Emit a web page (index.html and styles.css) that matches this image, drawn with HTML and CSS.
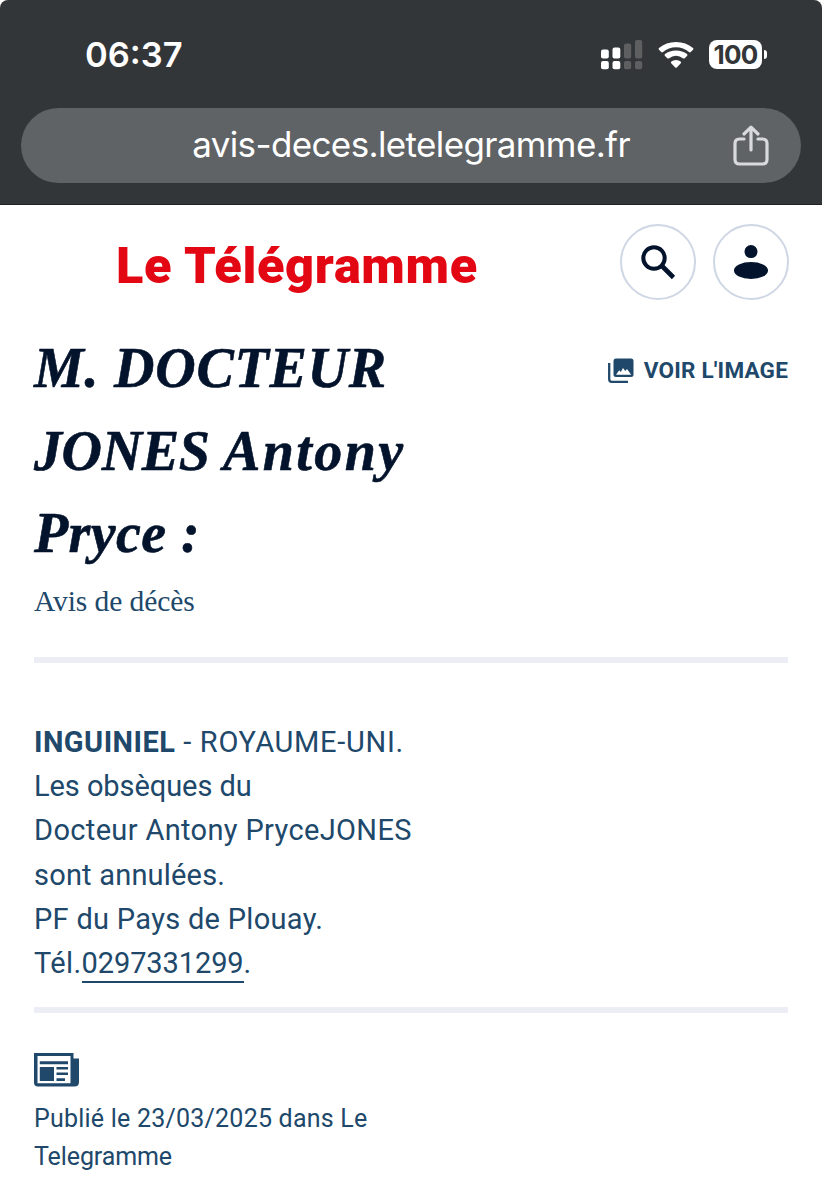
FILE: index.html
```html
<!DOCTYPE html>
<html lang="fr">
<head>
<meta charset="utf-8">
<title>Avis de décès - Le Télégramme</title>
<link rel="stylesheet" href="styles.css">
</head>
<body>
<div class="chrome">
  <div class="status">
    <span class="time">06:37</span>
    <div class="indicators">
      <svg class="signal" width="42" height="30" viewBox="0 0 42 30">
        <g fill="#fff"><rect x="0" y="9.500" width="7.800" height="9" rx="2"/><rect x="0" y="21" width="7.800" height="8.300" rx="2"/><rect x="11.500" y="7.500" width="7.800" height="11" rx="2"/><rect x="11.500" y="21" width="7.800" height="8.300" rx="2"/></g>
        <g fill="#5d5f61"><rect x="23" y="3.500" width="7.200" height="15" rx="2"/><rect x="23" y="21" width="7.200" height="8.300" rx="2"/><rect x="34" y="0" width="7.200" height="18.500" rx="2"/><rect x="34" y="21" width="7.200" height="8.300" rx="2"/></g>
      </svg>
      <svg class="wifi" width="36" height="28" viewBox="0 0 36 28" fill="#fff">
        <path d="M1 8.800Q0 7.900 1 7Q8 1 18 1T35 7Q36 7.900 35 8.800L32.800 11Q32 11.800 31 11Q25.500 6.200 18 6.200T5 11Q4 11.800 3.200 11Z"/>
        <path d="M7 14.900Q6 14 7 13.100Q11.500 9.500 18 9.500T29 13.100Q30 14 29 14.900L26.700 17.200Q25.800 18 24.800 17.200Q22 14.700 18 14.700T11.200 17.200Q10.200 18 9.300 17.200Z"/>
        <path d="M13.200 22.200Q12.500 21.300 13.400 20.600Q15 19 18 19T22.600 20.600Q23.500 21.300 22.800 22.200L18.800 26.400Q18 27.200 17.200 26.400Z"/>
      </svg>
      <div class="battery"><span class="level">100</span><span class="tip"></span></div>
    </div>
  </div>
  <div class="address">
    <span class="url">avis-deces.letelegramme.fr</span>
    <svg class="share" width="36" height="42" viewBox="0 0 36 42" fill="none" stroke="#d8dade" stroke-width="3.200" stroke-linecap="round" stroke-linejoin="round">
      <path d="M11 14H6.500Q2 14 2 18.500V34.500Q2 39 6.500 39H29.500Q34 39 34 34.500V18.500Q34 14 29.500 14H25"/>
      <path d="M18 25V2.500M11 9L18 2.200L25 9"/>
    </svg>
  </div>
</div>
<header class="masthead">
  <div class="logo">Le Télégramme</div>
  <div class="actions">
    <div class="round"><svg width="36" height="36" viewBox="0 0 36 36" fill="none" stroke="#03132b"><circle cx="14" cy="14" r="10.700" stroke-width="4"/><path d="M21.500 21.500L33.500 33.500" stroke-width="4.600"/></svg></div>
    <div class="round"><svg width="36" height="36" viewBox="0 0 36 36" fill="#03132b"><circle cx="18" cy="7.600" r="6.500"/><ellipse cx="18" cy="26.500" rx="17" ry="8.500"/></svg></div>
  </div>
</header>
<main class="notice">
  <div class="heading">
    <h1 class="title"><span class="line t1">M. DOCTEUR</span><span class="line t2">JONES <span class="first-name">Antony</span></span><span class="line t3">Pryce :</span></h1>
    <div class="view">
      <svg width="26" height="25" viewBox="0 0 26 25"><path d="M1.200 5V21.300Q1.200 23.800 3.700 23.800H20" fill="none" stroke="#20486a" stroke-width="2.300"/><path fill="#20486a" fill-rule="evenodd" d="M8 .5H23Q25.500 .5 25.500 3V16.500Q25.500 19 23 19H8Q5.500 19 5.500 16.500V3Q5.500 .5 8 .5ZM8 16.700H23.200L19 11L17.300 13L15 10L12.800 14L11.200 12.300Z"/></svg>
      <span class="view-label">VOIR L'IMAGE</span>
    </div>
  </div>
  <p class="kind">Avis de décès</p>
  <div class="rule"></div>
  <div class="text">
    <p class="b1"><strong>INGUINIEL</strong> - ROYAUME-UNI.</p>
    <p class="b2">Les obsèques du</p>
    <p class="b3">Docteur Antony PryceJONES</p>
    <p class="b4">sont annulées.</p>
    <p class="b5">PF du Pays de Plouay.</p>
    <p class="b6">Tél.<a class="phone">0297331299</a>.</p>
  </div>
  <div class="rule"></div>
  <div class="published">
    <svg class="paper" width="46" height="34" viewBox="0 0 46 34"><path fill="#20486a" fill-rule="evenodd" d="M0 0H39.500V5.500H45V29Q45 33.500 40.500 33.500H4Q0 33.500 0 29.500ZM3.500 3V30.300H36.500V3Z"/><path fill="#20486a" d="M5.800 8.300H34V11.200H5.800ZM5.800 14H20V28H5.800ZM22.500 14H34V16.600H22.500ZM22.500 19.500H34V22.100H22.500ZM22.500 25.300H31V27.900H22.500Z"/></svg>
    <p class="p1">Publié le 23/03/2025 dans Le</p>
    <p class="p2">Telegramme</p>
  </div>
</main>
</body>
</html>
```
FILE: styles.css
```css
* { box-sizing: border-box; }
body { margin: 0; background: #fff; color: #20486a; font-family: Roboto, "Liberation Sans", sans-serif; }
p, h1 { margin: 0; white-space: nowrap; }
svg { display: block; flex: none; }
.chrome { height: 205px; padding: 0 21px; background: #333638; border-bottom: 1px solid #202224; border-radius: 8px 8px 0 0; font-family: Inter, "Liberation Sans", sans-serif; color: #fff; }
.status { height: 108px; padding: 2px 34px 0 64px; display: flex; justify-content: space-between; align-items: center; }
.time { font-size: 34.5px; font-weight: 600; letter-spacing: 0; line-height: 40px; }
.indicators { display: flex; align-items: center; }
.signal { margin-right: 15px; }
.wifi { margin-right: 15px; }
.battery { display: flex; align-items: center; gap: 2px; margin-bottom: 2px; }
.level { width: 53px; height: 29px; border-radius: 8px; background: #fff; color: #333638; font-size: 26px; line-height: 29px; font-weight: 700; text-align: center; letter-spacing: -0.7px; }
.tip { width: 3px; height: 9px; border-radius: 0 5px 5px 0; background: #fff; }
.address { height: 75px; padding-right: 32px; border-radius: 38px; background: #5f6366; display: flex; align-items: center; justify-content: flex-end; }
.url { margin: 0 103px 4px 0; font-size: 35px; line-height: 44px; white-space: nowrap; letter-spacing: -0.63px; }
.masthead { height: 113px; padding: 18.500px 33.500px 0 116px; display: flex; justify-content: space-between; align-items: flex-start; }
.logo { margin-top: 12px; color: #e30613; font-size: 50.5px; line-height: 60px; font-weight: 900; white-space: nowrap; letter-spacing: 0.65px; }
.actions { display: flex; gap: 17px; }
.round { width: 76px; height: 76px; border: 2px solid #cfd6e4; border-radius: 50%; display: flex; align-items: center; justify-content: center; }
.notice { padding: 9px 34px 0; }
.heading { display: flex; justify-content: space-between; align-items: flex-start; }
.title { color: #03132b; font: italic 700 56px/82.500px "Liberation Serif", serif; -webkit-text-stroke: 0.6px #03132b; }
.line { display: block; width: fit-content; }
.t1 { letter-spacing: 0.75px; }
.t2 { letter-spacing: -0.4px; }
.first-name { letter-spacing: 2.4px; }
.t3 { letter-spacing: 0.4px; }
.view { display: flex; align-items: center; gap: 10px; padding-top: 30px; }
.view-label { font-size: 22.5px; line-height: 26px; font-weight: 700; white-space: nowrap; letter-spacing: 0.2px; }
.kind { margin-top: 8px; font: 29.5px/36px "Liberation Serif", serif; letter-spacing: -0.080px; }
.rule { height: 6px; background: #ecedf5; }
.kind + .rule { margin-top: 38px; }
.text { padding: 57.300px 0 21.200px; font-size: 29px; line-height: 44.300px; }
.text p { width: fit-content; }
.b1 { letter-spacing: 0.7px; }
.b1 strong { letter-spacing: 0.45px; }
.b2 { letter-spacing: -0.070px; }
.b3 { letter-spacing: 0.35px; }
.b4 { letter-spacing: 0.2px; }
.b5 { letter-spacing: 0.3px; }
.b6 { letter-spacing: 0.4px; }
.phone { display: inline-block; height: 42px; line-height: 44.300px; vertical-align: top; border-bottom: 2px solid #20486a; letter-spacing: -0.1px; }
.published { padding-top: 40px; font-size: 25px; line-height: 38px; }
.paper { margin-bottom: 13px; }
.published p { width: fit-content; }
.p1 { letter-spacing: 0.22px; }
.p2 { letter-spacing: -0.1px; }
```
